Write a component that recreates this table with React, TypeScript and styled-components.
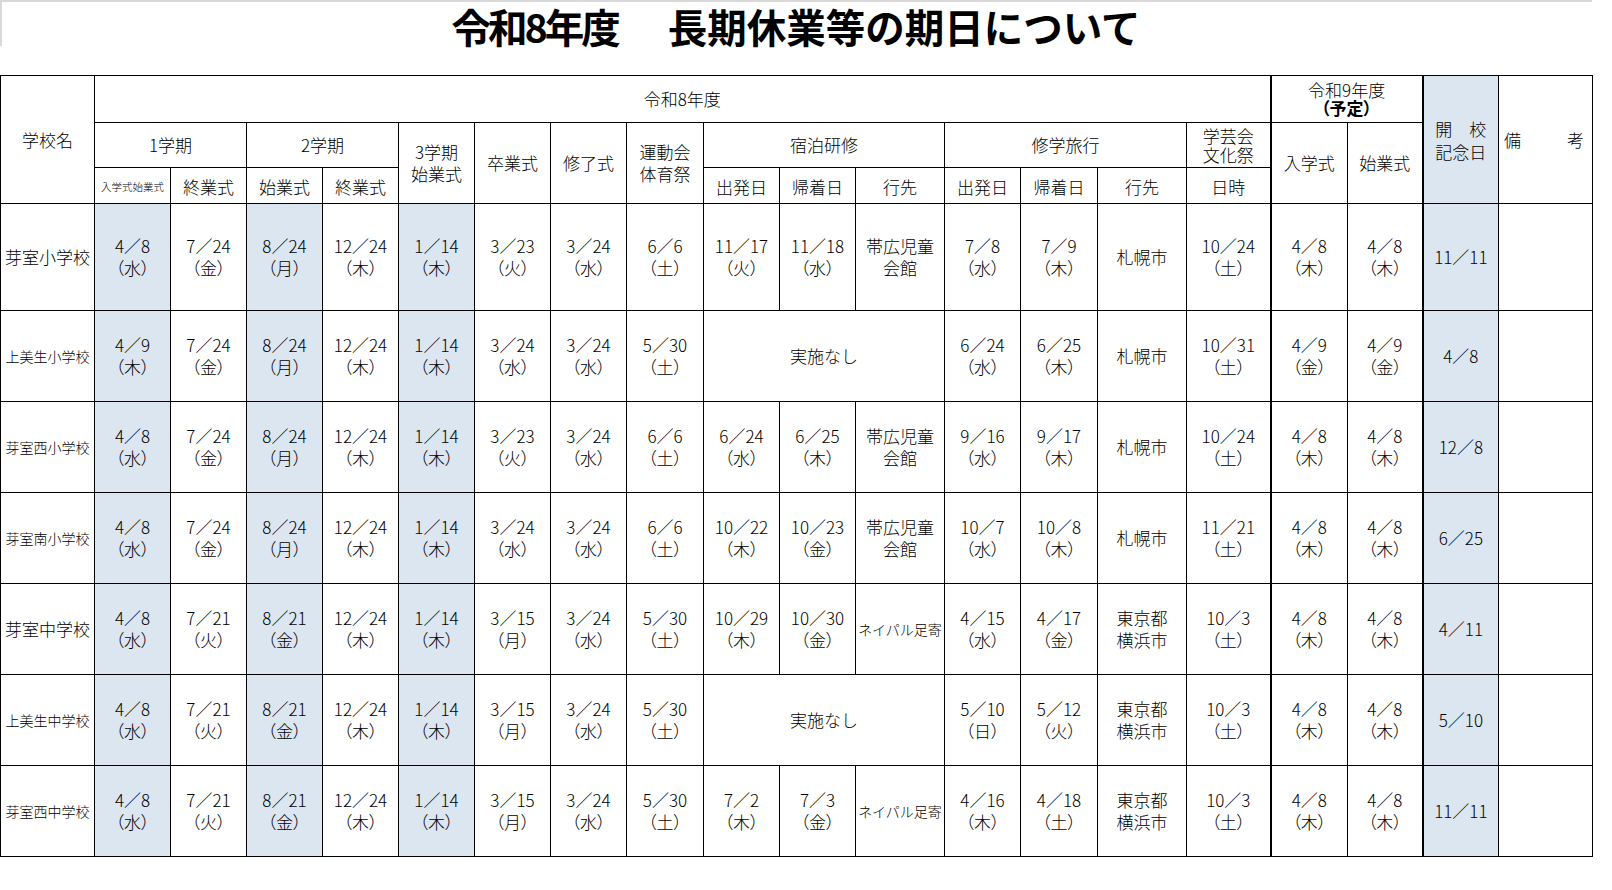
import React from 'react'
import styled, { createGlobalStyle, css } from 'styled-components'

const GlobalStyle = createGlobalStyle`
  html, body {
    margin: 0;
    padding: 0;
    background: #ffffff;
  }
  body {
    font-family: 'Noto Sans CJK JP', 'Noto Sans', sans-serif;
    color: #000000;
  }
`

const FILL = '#dce6f1'

const Page = styled.div`
  width: 1612px;
  height: 890px;
  overflow: hidden;
`

// the sheet's title cell: a light grey frame line on top and left
const TitleBar = styled.header`
  position: relative;
  box-sizing: border-box;
  width: 1592px;
  height: 75px;
  padding-top: 2px;
  display: flex;
  justify-content: center;
  align-items: flex-start;
  gap: 50px;

  &::before {
    content: '';
    position: absolute;
    top: 0;
    left: 0;
    right: 0;
    height: 44px;
    border-top: 2px solid #d9d9d9;
    border-left: 2px solid #d9d9d9;
    pointer-events: none;
  }
`

const TitleText = styled.span<{ $tight?: boolean }>`
  font-size: 39.5px;
  font-weight: 700;
  line-height: 1.2;
  letter-spacing: ${(p) => (p.$tight ? '-3px' : '0')};
`

const Sheet = styled.table`
  border-collapse: collapse;
  table-layout: fixed;
  width: 1592px;
`

const Col = styled.col<{ $w: number }>`
  width: ${(p) => p.$w}px;
`

const Row = styled.tr<{ $h: number }>`
  height: ${(p) => p.$h}px;
`

type CellProps = {
  $fill?: boolean
  $thick?: boolean
  $size?: number
  $lh?: number
  $padTop?: number
}

const cellBase = css<CellProps>`
  box-sizing: border-box;
  border: 1px solid #000000;
  ${(p) =>
    p.$thick &&
    css`
      border-left: 2px solid #000000;
    `}
  background: ${(p) => (p.$fill ? FILL : '#ffffff')};
  font-size: ${(p) => p.$size ?? 17}px;
  font-weight: 300;
  line-height: ${(p) => p.$lh ?? 22}px;
  padding: ${(p) => p.$padTop ?? 0}px 0 0 0;
  text-align: center;
  vertical-align: middle;
  white-space: nowrap;
  overflow: hidden;
`

const HeadCell = styled.th<CellProps>`
  ${cellBase}
`

const DataCell = styled.td<CellProps>`
  ${cellBase}
`

const Line = styled.span<{ $palt?: boolean; $bold?: boolean }>`
  display: block;
  ${(p) =>
    p.$palt &&
    css`
      font-feature-settings: 'palt';
    `}
  ${(p) =>
    p.$bold &&
    css`
      font-weight: 700;
    `}
`

const Spread = styled.div`
  display: flex;
  justify-content: space-between;
  padding: 0 8px 0 5px;
`

const widths = [94, 76, 76, 76, 76, 76, 76, 76, 77, 76, 76, 89, 76, 77, 89, 84, 77, 75, 76, 94]

// grid columns with the blue-grey fill in the body
const FILLED = [1, 3, 5, 18]
const THICK = [16, 18]

type Entry = { lines: string[]; span?: number; size?: number; palt?: boolean }

const dt = (md: string, wd: string): Entry => ({ lines: [md, `（${wd}）`], palt: true })
const tx = (...lines: string[]): Entry => ({ lines })
const none: Entry = { lines: ['実施なし'], span: 3 }
const neipal: Entry = { lines: ['ネイパル足寄'], size: 14 }
const obihiro = tx('帯広児童', '会館')
const tokyo = tx('東京都', '横浜市')

type School = { name: string; height: number; cells: Entry[] }

const schools: School[] = [
  {
    name: '芽室小学校',
    height: 107,
    cells: [
      dt('4／8', '水'), dt('7／24', '金'), dt('8／24', '月'), dt('12／24', '木'), dt('1／14', '木'),
      dt('3／23', '火'), dt('3／24', '水'), dt('6／6', '土'),
      dt('11／17', '火'), dt('11／18', '水'), obihiro,
      dt('7／8', '水'), dt('7／9', '木'), tx('札幌市'),
      dt('10／24', '土'), dt('4／8', '木'), dt('4／8', '木'), tx('11／11'), tx(''),
    ],
  },
  {
    name: '上美生小学校',
    height: 91,
    cells: [
      dt('4／9', '木'), dt('7／24', '金'), dt('8／24', '月'), dt('12／24', '木'), dt('1／14', '木'),
      dt('3／24', '水'), dt('3／24', '水'), dt('5／30', '土'),
      none,
      dt('6／24', '水'), dt('6／25', '木'), tx('札幌市'),
      dt('10／31', '土'), dt('4／9', '金'), dt('4／9', '金'), tx('4／8'), tx(''),
    ],
  },
  {
    name: '芽室西小学校',
    height: 91,
    cells: [
      dt('4／8', '水'), dt('7／24', '金'), dt('8／24', '月'), dt('12／24', '木'), dt('1／14', '木'),
      dt('3／23', '火'), dt('3／24', '水'), dt('6／6', '土'),
      dt('6／24', '水'), dt('6／25', '木'), obihiro,
      dt('9／16', '水'), dt('9／17', '木'), tx('札幌市'),
      dt('10／24', '土'), dt('4／8', '木'), dt('4／8', '木'), tx('12／8'), tx(''),
    ],
  },
  {
    name: '芽室南小学校',
    height: 91,
    cells: [
      dt('4／8', '水'), dt('7／24', '金'), dt('8／24', '月'), dt('12／24', '木'), dt('1／14', '木'),
      dt('3／24', '水'), dt('3／24', '水'), dt('6／6', '土'),
      dt('10／22', '木'), dt('10／23', '金'), obihiro,
      dt('10／7', '水'), dt('10／8', '木'), tx('札幌市'),
      dt('11／21', '土'), dt('4／8', '木'), dt('4／8', '木'), tx('6／25'), tx(''),
    ],
  },
  {
    name: '芽室中学校',
    height: 91,
    cells: [
      dt('4／8', '水'), dt('7／21', '火'), dt('8／21', '金'), dt('12／24', '木'), dt('1／14', '木'),
      dt('3／15', '月'), dt('3／24', '水'), dt('5／30', '土'),
      dt('10／29', '木'), dt('10／30', '金'), neipal,
      dt('4／15', '水'), dt('4／17', '金'), tokyo,
      dt('10／3', '土'), dt('4／8', '木'), dt('4／8', '木'), tx('4／11'), tx(''),
    ],
  },
  {
    name: '上美生中学校',
    height: 91,
    cells: [
      dt('4／8', '水'), dt('7／21', '火'), dt('8／21', '金'), dt('12／24', '木'), dt('1／14', '木'),
      dt('3／15', '月'), dt('3／24', '水'), dt('5／30', '土'),
      none,
      dt('5／10', '日'), dt('5／12', '火'), tokyo,
      dt('10／3', '土'), dt('4／8', '木'), dt('4／8', '木'), tx('5／10'), tx(''),
    ],
  },
  {
    name: '芽室西中学校',
    height: 91,
    cells: [
      dt('4／8', '水'), dt('7／21', '火'), dt('8／21', '金'), dt('12／24', '木'), dt('1／14', '木'),
      dt('3／15', '月'), dt('3／24', '水'), dt('5／30', '土'),
      dt('7／2', '木'), dt('7／3', '金'), neipal,
      dt('4／16', '木'), dt('4／18', '土'), tokyo,
      dt('10／3', '土'), dt('4／8', '木'), dt('4／8', '木'), tx('11／11'), tx(''),
    ],
  },
]

const SchoolRow = ({ school }: { school: School }) => {
  let col = 1
  return (
    <Row $h={school.height}>
      <DataCell $size={school.name.length > 5 ? 14 : 17}>{school.name}</DataCell>
      {school.cells.map((entry, i) => {
        const at = col
        col += entry.span ?? 1
        return (
          <DataCell
            key={i}
            colSpan={entry.span}
            $fill={FILLED.includes(at)}
            $thick={THICK.includes(at)}
            $size={entry.size}
          >
            {entry.lines.map((line, j) => (
              <Line key={j} $palt={entry.palt && j === 1}>
                {line}
              </Line>
            ))}
          </DataCell>
        )
      })}
    </Row>
  )
}

export default function App() {
  return (
    <Page>
      <GlobalStyle />
      <TitleBar>
        <TitleText $tight>令和8年度</TitleText>
        <TitleText>長期休業等の期日について</TitleText>
      </TitleBar>
      <Sheet>
        <colgroup>
          {widths.map((w, i) => (
            <Col key={i} $w={w} />
          ))}
        </colgroup>
        <thead>
          <Row $h={47}>
            <HeadCell rowSpan={3}>学校名</HeadCell>
            <HeadCell colSpan={15}>令和8年度</HeadCell>
            <HeadCell colSpan={2} $thick $lh={18}>
              <Line>令和9年度</Line>
              <Line $palt $bold>（予定）</Line>
            </HeadCell>
            <HeadCell rowSpan={3} $fill $thick $lh={23}>
              <Line>開　校</Line>
              <Line>記念日</Line>
            </HeadCell>
            <HeadCell rowSpan={3}>
              <Spread>
                <span>備</span>
                <span>考</span>
              </Spread>
            </HeadCell>
          </Row>
          <Row $h={45}>
            <HeadCell colSpan={2}>1学期</HeadCell>
            <HeadCell colSpan={2}>2学期</HeadCell>
            <HeadCell rowSpan={2}>
              <Line>3学期</Line>
              <Line>始業式</Line>
            </HeadCell>
            <HeadCell rowSpan={2}>卒業式</HeadCell>
            <HeadCell rowSpan={2}>修了式</HeadCell>
            <HeadCell rowSpan={2}>
              <Line>運動会</Line>
              <Line>体育祭</Line>
            </HeadCell>
            <HeadCell colSpan={3}>宿泊研修</HeadCell>
            <HeadCell colSpan={3}>修学旅行</HeadCell>
            <HeadCell $lh={19}>
              <Line>学芸会</Line>
              <Line>文化祭</Line>
            </HeadCell>
            <HeadCell rowSpan={2} $thick>入学式</HeadCell>
            <HeadCell rowSpan={2}>始業式</HeadCell>
          </Row>
          <Row $h={36}>
            <HeadCell $size={10.5} $padTop={2}>入学式始業式</HeadCell>
            <HeadCell $padTop={2}>終業式</HeadCell>
            <HeadCell $padTop={2}>始業式</HeadCell>
            <HeadCell $padTop={2}>終業式</HeadCell>
            <HeadCell $padTop={2}>出発日</HeadCell>
            <HeadCell $padTop={2}>帰着日</HeadCell>
            <HeadCell $padTop={2}>行先</HeadCell>
            <HeadCell $padTop={2}>出発日</HeadCell>
            <HeadCell $padTop={2}>帰着日</HeadCell>
            <HeadCell $padTop={2}>行先</HeadCell>
            <HeadCell $padTop={2}>日時</HeadCell>
          </Row>
        </thead>
        <tbody>
          {schools.map((s) => (
            <SchoolRow key={s.name} school={s} />
          ))}
        </tbody>
      </Sheet>
    </Page>
  )
}
